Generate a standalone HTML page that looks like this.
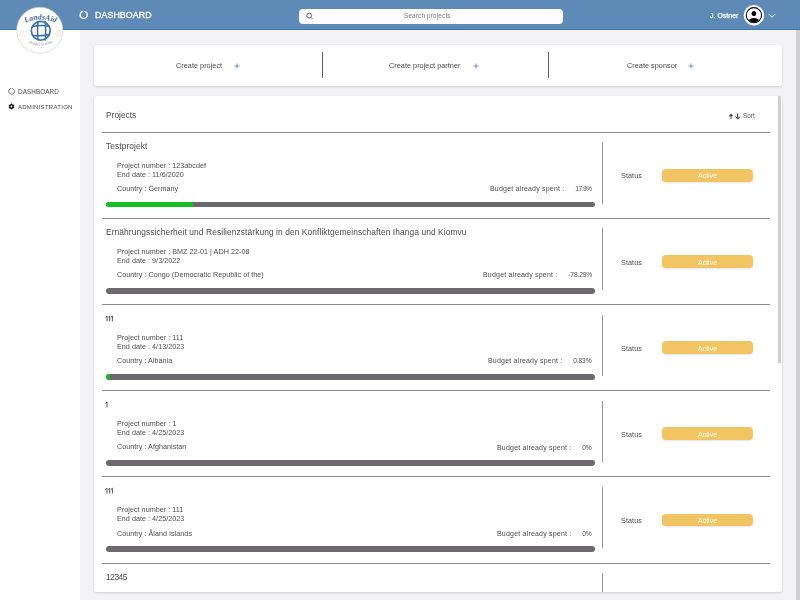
<!DOCTYPE html>
<html><head><meta charset="utf-8"><style>
html,body{margin:0;padding:0;width:800px;height:600px;overflow:hidden;background:#f3f2f5;font-family:"Liberation Sans",sans-serif;}
.t{position:absolute;white-space:nowrap;line-height:1;will-change:transform;}
.abs{position:absolute;}
</style></head><body>
<div class="abs" style="left:0;top:0;width:80px;height:600px;background:#ffffff;"></div>
<div class="abs" style="left:796px;top:30px;width:4px;height:570px;background:#d1d0d3;"></div>
<div class="abs" style="left:0;top:0;width:800px;height:29px;background:#5d8ab6;border-bottom:1px solid #3f78ac;"></div>
<svg class="abs" style="left:78px;top:9px" width="12" height="12" viewBox="0 0 12 12"><path d="M6.69 2.34A3.6 3.6 0 1 1 4.71 2.34" fill="none" stroke="#fff" stroke-width="1.35" stroke-linecap="round"/></svg>
<div class="t" style="left:94.5px;top:11.15px;font-size:8.8px;color:#ffffff;font-weight:normal;letter-spacing:0.1px;-webkit-text-stroke:0.3px #fff;">DASHBOARD</div>
<div class="abs" style="left:299px;top:8.5px;width:264px;height:15px;background:#fdfcfe;border-radius:4px;"></div>
<svg class="abs" style="left:305px;top:12px" width="10" height="8" viewBox="0 0 10 8"><circle cx="4.2" cy="3.6" r="2.4" fill="none" stroke="#666" stroke-width="1"/><line x1="6" y1="5.4" x2="7.8" y2="7.2" stroke="#666" stroke-width="1"/></svg>
<div class="t" style="left:404.2px;top:12.58px;font-size:6.4px;color:#7a7a7a;font-weight:normal;letter-spacing:0.15px;">Search projects</div>
<div class="t" style="left:709.9px;top:12.47px;font-size:7.0px;color:#ffffff;font-weight:normal;letter-spacing:0.0px;-webkit-text-stroke:0.25px #fff;">J. Ostner</div>
<svg class="abs" style="left:743px;top:5px" width="22" height="21" viewBox="0 0 22 21">
<circle cx="10.9" cy="10.2" r="10.2" fill="#fff"/>
<circle cx="10.9" cy="10.2" r="7.6" fill="#fff" stroke="#000" stroke-width="1.05"/>
<ellipse cx="10.9" cy="8.5" rx="2.35" ry="2.5" fill="#000"/>
<path d="M5.6 15 Q10.9 11.2 16.2 15 A7.3 7.3 0 0 1 5.6 15Z" fill="#000"/>
</svg>
<svg class="abs" style="left:768px;top:13px" width="8" height="6" viewBox="0 0 8 6"><polyline points="1,1.3 4,4.3 7,1.3" fill="none" stroke="#fff" stroke-width="1"/></svg>
<svg class="abs" style="left:0;top:0" width="80" height="60" viewBox="0 0 80 60">
<defs><path id="arcT" d="M24 23.5 A36 36 0 0 1 57 23.5"/><path id="arcB" d="M27 42 A30 30 0 0 0 54 42"/></defs>
<circle cx="39.75" cy="30.25" r="23.1" fill="#fefefe" stroke="#d9c6bb" stroke-width="0.6"/>
<text font-family="Liberation Serif" font-weight="bold" font-style="italic" font-size="7.6" fill="#3d64a0" letter-spacing="0.1"><textPath href="#arcT" startOffset="50%" text-anchor="middle">LandsAid</textPath></text>
<circle cx="40.75" cy="30.75" r="9.4" fill="none" stroke="#3f73b0" stroke-width="1.7"/>
<path d="M32.3 26.6 Q40.75 24.6 49.6 26.2 M32.2 35.2 Q40.75 36.6 49.4 34.6 M37.9 21.2 Q37.2 30.75 37.9 40.5 M45.3 21.2 Q46 30.75 45.3 40.5" fill="none" stroke="#3a6db0" stroke-width="1.5"/>
<text font-family="Liberation Sans" font-size="3.4" fill="#8a8f9c"><textPath href="#arcB" startOffset="50%" text-anchor="middle">Bridges to relief</textPath></text>
<path d="M19.5 37 l1 -7 M22 37 v-7 M24.5 37 l-1 -7" fill="none" stroke="#f1f0f4" stroke-width="1.1"/>
<path d="M56.5 37 l1 -7 M59 37 v-7 M61.5 37 l-1 -7" fill="none" stroke="#f8ebe0" stroke-width="1.3"/>
</svg>
<svg class="abs" style="left:6px;top:86px" width="12" height="12" viewBox="0 0 12 12"><path d="M6.51 2.39A2.95 2.95 0 1 1 4.69 2.39" fill="none" stroke="#555" stroke-width="0.85" stroke-linecap="round"/></svg>
<div class="t" style="left:18px;top:88.87px;font-size:6.3px;color:#484848;font-weight:normal;letter-spacing:0.1px;">DASHBOARD</div>
<svg class="abs" style="left:7.9px;top:103.1px" width="7" height="7" viewBox="0 0 7 7"><path d="M3.50 0.60L4.55 1.68L6.01 2.05L5.60 3.50L6.01 4.95L4.55 5.32L3.50 6.40L2.45 5.32L0.99 4.95L1.40 3.50L0.99 2.05L2.45 1.68Z" fill="#111" stroke="#111" stroke-width="0.5" stroke-linejoin="round"/><circle cx="3.5" cy="3.5" r="0.9" fill="#fff"/></svg>
<div class="t" style="left:17.5px;top:104.32px;font-size:6.0px;color:#484848;font-weight:normal;letter-spacing:0.27px;">ADMINISTRATION</div>
<div class="abs" style="left:94px;top:45px;width:688px;height:40.5px;background:#fff;border-radius:2.5px;box-shadow:0 1px 2.5px rgba(0,0,0,0.15),0 0 1px rgba(0,0,0,0.05);"></div>
<div class="t" style="left:175.75px;top:61.52px;font-size:7.3px;color:#4a4a4a;font-weight:normal;letter-spacing:0.02px;">Create project</div>
<div class="t" style="left:388.5px;top:61.52px;font-size:7.3px;color:#4a4a4a;font-weight:normal;letter-spacing:0.02px;">Create project partner</div>
<div class="t" style="left:626.5px;top:61.52px;font-size:7.3px;color:#4a4a4a;font-weight:normal;letter-spacing:0.02px;">Create sponsor</div>
<svg class="abs" style="left:234.3px;top:62.5px" width="6" height="6" viewBox="0 0 6 6"><path d="M0.5 3H5.5M3 0.5V5.5" stroke="#5a78b0" stroke-width="0.8"/></svg>
<svg class="abs" style="left:473.2px;top:62.5px" width="6" height="6" viewBox="0 0 6 6"><path d="M0.5 3H5.5M3 0.5V5.5" stroke="#5a78b0" stroke-width="0.8"/></svg>
<svg class="abs" style="left:688px;top:62.5px" width="6" height="6" viewBox="0 0 6 6"><path d="M0.5 3H5.5M3 0.5V5.5" stroke="#5a78b0" stroke-width="0.8"/></svg>
<div class="abs" style="left:322.0px;top:52.4px;width:1px;height:25.2px;background:#606060;"></div>
<div class="abs" style="left:548.2px;top:52.4px;width:1px;height:25.2px;background:#606060;"></div>
<div class="abs" style="left:94px;top:96px;width:688px;height:495.5px;background:#fff;border-radius:2.5px;box-shadow:0 1px 2.5px rgba(0,0,0,0.15),0 0 1px rgba(0,0,0,0.05);overflow:hidden;">
<div class="abs" style="left:0;top:0;width:688px;height:495.5px;">
<div class="t" style="left:11.799999999999997px;top:14.89px;font-size:8.4px;color:#4a4a4a;font-weight:normal;letter-spacing:0.0px;">Projects</div>
<div class="t" style="left:648.5px;top:16.88px;font-size:6.4px;color:#555;font-weight:normal;letter-spacing:0.0px;">Sort</div>
<svg class="abs" style="left:634px;top:16.5px" width="13" height="7" viewBox="0 0 13 7"><path d="M3 6.2V2" fill="none" stroke="#555" stroke-width="1"/><path d="M0.9 3.3L3 0.6L5.1 3.3Z" fill="#333"/><path d="M9.7 0.6V4.8" fill="none" stroke="#222" stroke-width="1"/><path d="M7.6 3.6L9.7 6.2L11.8 3.6" fill="none" stroke="#222" stroke-width="1"/></svg>
<div class="abs" style="left:8px;top:35.5px;width:668px;height:1px;background:#8d8b90;"></div>
<div class="t" style="left:11.799999999999997px;top:46.29px;font-size:8.4px;color:#4a4a4a;font-weight:normal;letter-spacing:0.09px;">Testprojekt</div>
<div class="t" style="left:23px;top:65.81px;font-size:7.2px;color:#4d4d4d;font-weight:normal;letter-spacing:0.03px;">Project number : 123abcdef</div>
<div class="t" style="left:23px;top:74.81px;font-size:7.2px;color:#4d4d4d;font-weight:normal;letter-spacing:0.03px;">End date : 11/6/2020</div>
<div class="t" style="left:23px;top:89.01px;font-size:7.2px;color:#4d4d4d;font-weight:normal;letter-spacing:0.03px;">Country : Germany</div>
<div class="t" style="right:190.20px;top:89.17px;font-size:7.0px;color:#4d4d4d;font-weight:normal;"><span style="letter-spacing:0.2px">Budget already spent :</span><span style="display:inline-block;width:10.8px"></span><span style="letter-spacing:-0.55px;font-size:6.7px">17.9%</span></div>
<div class="abs" style="left:508.1px;top:46.30px;width:1px;height:61.6px;background:#98969a;"></div>
<div class="t" style="left:527px;top:76.41px;font-size:7.2px;color:#4d4d4d;font-weight:normal;letter-spacing:0.1px;">Status</div>
<div class="abs" style="left:567.6px;top:73.10px;width:91.4px;height:12.9px;background:#f3c562;border-radius:4px;box-shadow:0 1px 1.5px rgba(0,0,0,0.1);"></div>
<div class="t" style="left:603.8px;top:77.46px;font-size:6.9px;color:#ffffff;font-weight:normal;letter-spacing:0.05px;">Active</div>
<div class="abs" style="left:12px;top:105.80px;width:489px;height:5.7px;background:#6b696d;border-radius:3px;overflow:hidden;"><div class="abs" style="left:0;top:0;width:87.2px;height:5.7px;background:#14c024;border-radius:3px 0 0 3px;"></div></div>
<div class="abs" style="left:8px;top:122.00px;width:668px;height:1px;background:#8d8b90;"></div>
<div class="t" style="left:11.799999999999997px;top:132.41px;font-size:8.4px;color:#4a4a4a;font-weight:normal;letter-spacing:0.09px;">Ernährungssicherheit und Resilienzstärkung in den Konfliktgemeinschaften Ihanga und Kiomvu</div>
<div class="t" style="left:23px;top:151.93px;font-size:7.2px;color:#4d4d4d;font-weight:normal;letter-spacing:0.03px;">Project number : BMZ 22-01 | ADH 22-08</div>
<div class="t" style="left:23px;top:160.93px;font-size:7.2px;color:#4d4d4d;font-weight:normal;letter-spacing:0.03px;">End date : 9/3/2022</div>
<div class="t" style="left:23px;top:175.13px;font-size:7.2px;color:#4d4d4d;font-weight:normal;letter-spacing:0.03px;">Country : Congo (Democratic Republic of the)</div>
<div class="t" style="right:190.20px;top:175.30px;font-size:7.0px;color:#4d4d4d;font-weight:normal;"><span style="letter-spacing:0.2px">Budget already spent :</span><span style="display:inline-block;width:10.8px"></span><span style="letter-spacing:-0.15px;font-size:6.7px">-78.29%</span></div>
<div class="abs" style="left:508.1px;top:132.43px;width:1px;height:61.6px;background:#98969a;"></div>
<div class="t" style="left:527px;top:162.53px;font-size:7.2px;color:#4d4d4d;font-weight:normal;letter-spacing:0.1px;">Status</div>
<div class="abs" style="left:567.6px;top:159.23px;width:91.4px;height:12.9px;background:#f3c562;border-radius:4px;box-shadow:0 1px 1.5px rgba(0,0,0,0.1);"></div>
<div class="t" style="left:603.8px;top:163.58px;font-size:6.9px;color:#ffffff;font-weight:normal;letter-spacing:0.05px;">Active</div>
<div class="abs" style="left:12px;top:191.93px;width:489px;height:5.7px;background:#6b696d;border-radius:3px;overflow:hidden;"></div>
<div class="abs" style="left:8px;top:208.12px;width:668px;height:1px;background:#8d8b90;"></div>
<svg class="abs" style="left:0;top:0" width="688" height="496"><path d="M11.50 221.25L13.00 220.05V225.25M14.20 221.25L15.70 220.05V225.25M16.90 221.25L18.40 220.05V225.25" fill="none" stroke="#4a4a4a" stroke-width="0.95"/></svg>
<div class="t" style="left:23px;top:238.06px;font-size:7.2px;color:#4d4d4d;font-weight:normal;letter-spacing:0.03px;">Project number : 111</div>
<div class="t" style="left:23px;top:247.06px;font-size:7.2px;color:#4d4d4d;font-weight:normal;letter-spacing:0.03px;">End date : 4/13/2023</div>
<div class="t" style="left:23px;top:261.26px;font-size:7.2px;color:#4d4d4d;font-weight:normal;letter-spacing:0.03px;">Country : Albania</div>
<div class="t" style="right:190.20px;top:261.42px;font-size:7.0px;color:#4d4d4d;font-weight:normal;"><span style="letter-spacing:0.2px">Budget already spent :</span><span style="display:inline-block;width:10.8px"></span><span style="letter-spacing:-0.15px;font-size:6.7px">0.83%</span></div>
<div class="abs" style="left:508.1px;top:218.55px;width:1px;height:61.6px;background:#98969a;"></div>
<div class="t" style="left:527px;top:248.66px;font-size:7.2px;color:#4d4d4d;font-weight:normal;letter-spacing:0.1px;">Status</div>
<div class="abs" style="left:567.6px;top:245.35px;width:91.4px;height:12.9px;background:#f3c562;border-radius:4px;box-shadow:0 1px 1.5px rgba(0,0,0,0.1);"></div>
<div class="t" style="left:603.8px;top:249.71px;font-size:6.9px;color:#ffffff;font-weight:normal;letter-spacing:0.05px;">Active</div>
<div class="abs" style="left:12px;top:278.05px;width:489px;height:5.7px;background:#6b696d;border-radius:3px;overflow:hidden;"><div class="abs" style="left:0;top:0;width:4.0px;height:5.7px;background:#14c024;border-radius:3px 0 0 3px;"></div></div>
<div class="abs" style="left:8px;top:294.25px;width:668px;height:1px;background:#8d8b90;"></div>
<svg class="abs" style="left:0;top:0" width="688" height="496"><path d="M11.50 307.37L13.00 306.17V311.38" fill="none" stroke="#4a4a4a" stroke-width="0.95"/></svg>
<div class="t" style="left:23px;top:324.18px;font-size:7.2px;color:#4d4d4d;font-weight:normal;letter-spacing:0.03px;">Project number : 1</div>
<div class="t" style="left:23px;top:333.18px;font-size:7.2px;color:#4d4d4d;font-weight:normal;letter-spacing:0.03px;">End date : 4/25/2023</div>
<div class="t" style="left:23px;top:347.38px;font-size:7.2px;color:#4d4d4d;font-weight:normal;letter-spacing:0.03px;">Country : Afghanistan</div>
<div class="t" style="right:190.20px;top:347.55px;font-size:7.0px;color:#4d4d4d;font-weight:normal;"><span style="letter-spacing:0.2px">Budget already spent :</span><span style="display:inline-block;width:10.8px"></span><span style="letter-spacing:-0.15px;font-size:6.7px">0%</span></div>
<div class="abs" style="left:508.1px;top:304.67px;width:1px;height:61.6px;background:#98969a;"></div>
<div class="t" style="left:527px;top:334.78px;font-size:7.2px;color:#4d4d4d;font-weight:normal;letter-spacing:0.1px;">Status</div>
<div class="abs" style="left:567.6px;top:331.47px;width:91.4px;height:12.9px;background:#f3c562;border-radius:4px;box-shadow:0 1px 1.5px rgba(0,0,0,0.1);"></div>
<div class="t" style="left:603.8px;top:335.83px;font-size:6.9px;color:#ffffff;font-weight:normal;letter-spacing:0.05px;">Active</div>
<div class="abs" style="left:12px;top:364.17px;width:489px;height:5.7px;background:#6b696d;border-radius:3px;overflow:hidden;"></div>
<div class="abs" style="left:8px;top:380.38px;width:668px;height:1px;background:#8d8b90;"></div>
<svg class="abs" style="left:0;top:0" width="688" height="496"><path d="M11.50 393.50L13.00 392.30V397.50M14.20 393.50L15.70 392.30V397.50M16.90 393.50L18.40 392.30V397.50" fill="none" stroke="#4a4a4a" stroke-width="0.95"/></svg>
<div class="t" style="left:23px;top:410.31px;font-size:7.2px;color:#4d4d4d;font-weight:normal;letter-spacing:0.03px;">Project number : 111</div>
<div class="t" style="left:23px;top:419.31px;font-size:7.2px;color:#4d4d4d;font-weight:normal;letter-spacing:0.03px;">End date : 4/25/2023</div>
<div class="t" style="left:23px;top:433.51px;font-size:7.2px;color:#4d4d4d;font-weight:normal;letter-spacing:0.03px;">Country : Åland Islands</div>
<div class="t" style="right:190.20px;top:433.67px;font-size:7.0px;color:#4d4d4d;font-weight:normal;"><span style="letter-spacing:0.2px">Budget already spent :</span><span style="display:inline-block;width:10.8px"></span><span style="letter-spacing:-0.15px;font-size:6.7px">0%</span></div>
<div class="abs" style="left:508.1px;top:390.80px;width:1px;height:61.6px;background:#98969a;"></div>
<div class="t" style="left:527px;top:420.91px;font-size:7.2px;color:#4d4d4d;font-weight:normal;letter-spacing:0.1px;">Status</div>
<div class="abs" style="left:567.6px;top:417.60px;width:91.4px;height:12.9px;background:#f3c562;border-radius:4px;box-shadow:0 1px 1.5px rgba(0,0,0,0.1);"></div>
<div class="t" style="left:603.8px;top:421.96px;font-size:6.9px;color:#ffffff;font-weight:normal;letter-spacing:0.05px;">Active</div>
<div class="abs" style="left:12px;top:450.30px;width:489px;height:5.7px;background:#6b696d;border-radius:3px;overflow:hidden;"></div>
<div class="abs" style="left:8px;top:466.50px;width:668px;height:1px;background:#8d8b90;"></div>
<div class="t" style="left:11.799999999999997px;top:476.91px;font-size:8.4px;color:#4a4a4a;font-weight:normal;letter-spacing:-0.45px;">12345</div>
<div class="abs" style="left:508.1px;top:476.92px;width:1px;height:61.6px;background:#98969a;"></div>
</div>
<div class="abs" style="left:684.3px;top:0px;width:3px;height:267px;background:#cfced1;"></div>
</div>
</body></html>
